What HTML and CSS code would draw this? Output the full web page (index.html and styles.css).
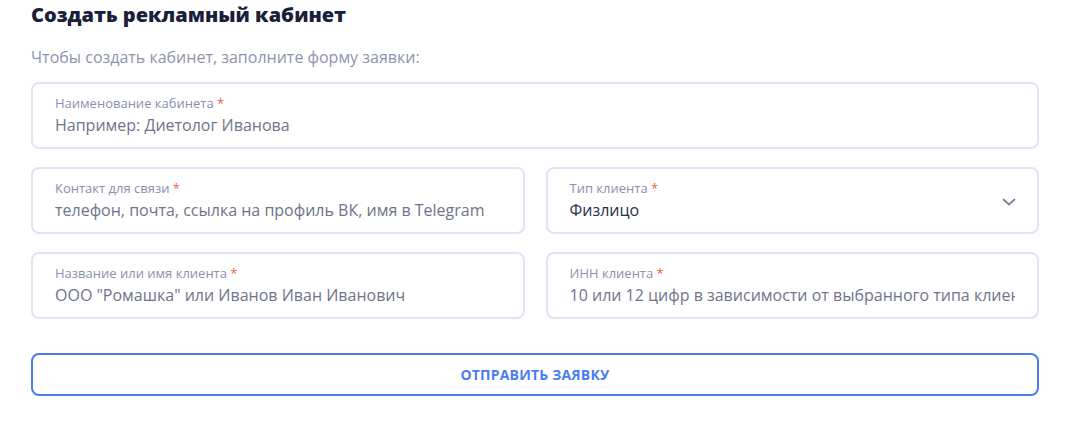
FILE: index.html
```html
<!DOCTYPE html>
<html lang="ru">
<head>
    <meta charset="UTF-8">
    <meta name="viewport" content="width=device-width, initial-scale=1.0">
    <title>Создать рекламный кабинет</title>
    <link rel="stylesheet" href="styles.css">
</head>
<body>
    <div class="container">
        <h1 class="title">Создать рекламный кабинет</h1>
        <p class="subtitle">Чтобы создать кабинет, заполните форму заявки:</p>

        <form class="form" action="javascript:void(0);">
            <label class="field">
                <span class="label">Наименование кабинета <span class="req">*</span></span>
                <input type="text" class="input" placeholder="Например: Диетолог Иванова">
            </label>

            <div class="row">
                <label class="field">
                    <span class="label">Контакт для связи <span class="req">*</span></span>
                    <input type="text" class="input" placeholder="телефон, почта, ссылка на профиль ВК, имя в Telegram">
                </label>
                <label class="field field-select">
                    <span class="label">Тип клиента <span class="req">*</span></span>
                    <span class="value">Физлицо</span>
                    <svg class="chevron" width="14" height="8" viewBox="0 0 14 8" fill="none">
                        <path d="M1.5 1.5L7 6.5L12.5 1.5" stroke="#7b819f" stroke-width="1.8" stroke-linecap="round" stroke-linejoin="round"/>
                    </svg>
                </label>
            </div>

            <div class="row">
                <label class="field">
                    <span class="label">Название или имя клиента <span class="req">*</span></span>
                    <input type="text" class="input" placeholder='ООО "Ромашка" или Иванов Иван Иванович'>
                </label>
                <label class="field">
                    <span class="label">ИНН клиента <span class="req">*</span></span>
                    <input type="text" class="input" placeholder="10 или 12 цифр в зависимости от выбранного типа клиента">
                </label>
            </div>

            <button type="submit" class="btn">Отправить заявку</button>
        </form>
    </div>
</body>
</html>
```

FILE: styles.css
```css
body {
    font-family: "Open Sans", "Noto Sans", sans-serif;
    background-color: #fff;
    margin: 0;
}

.container {
    padding: 0 26px 0 31px;
}

.title {
    font-size: 20px;
    font-weight: 800;
    color: #1b1f3b;
    margin: 0;
    line-height: 30px;
}

.subtitle {
    font-size: 16px;
    color: #8e94ad;
    margin: 16px 0 0 0;
    line-height: 22px;
}

.form {
    display: flex;
    flex-direction: column;
    gap: 18px;
    margin-top: 14px;
}

.row {
    display: grid;
    grid-template-columns: 1fr 1fr;
    gap: 21px;
}

.field {
    display: flex;
    flex-direction: column;
    justify-content: center;
    position: relative;
    height: 67px;
    box-sizing: border-box;
    padding: 0 22px;
    border: 2px solid #e1e3f5;
    border-radius: 8px;
}

.label {
    font-size: 13px;
    color: #8a8fb0;
    line-height: 16px;
}

.req {
    color: #f2603f;
}

.input {
    font-family: inherit;
    font-size: 16px;
    color: #2b2f47;
    border: none;
    outline: none;
    padding: 0;
    margin-top: 3px;
    line-height: 22px;
    background: transparent;
    width: 100%;
}

.input::placeholder {
    color: #70748a;
    opacity: 1;
}

.value {
    font-size: 16px;
    color: #2b2f47;
    line-height: 22px;
    margin-top: 3px;
}

.chevron {
    position: absolute;
    right: 21px;
    top: 29px;
}

.btn {
    font-family: inherit;
    font-size: 14px;
    font-weight: 700;
    text-transform: uppercase;
    letter-spacing: 0.2px;
    color: #4a7df0;
    background: #fff;
    border: 2px solid #4a7df0;
    border-radius: 8px;
    height: 43px;
    margin-top: 16px;
    cursor: pointer;
}
```
